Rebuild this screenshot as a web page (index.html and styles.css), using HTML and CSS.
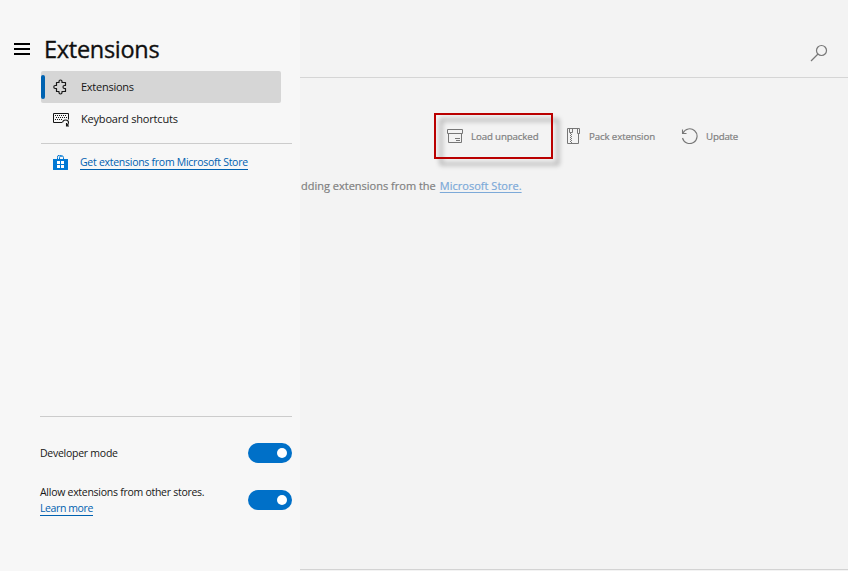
FILE: index.html
```html
<!DOCTYPE html>
<html lang="en">
<head>
<meta charset="utf-8">
<title>Extensions</title>
<link rel="stylesheet" href="styles.css">
</head>
<body>
<div class="app">
  <aside class="sidebar">
    <header class="brand">
      <svg class="menu" width="16" height="12" viewBox="0 0 16 12"><path d="M0 0h16v2H0zM0 5h16v2H0zM0 10h16v2H0z"/></svg>
      <h1>Extensions</h1>
    </header>
    <nav class="nav">
      <a class="nav-item active">
        <svg width="16" height="16" viewBox="0 0 16 16" fill="none" stroke="#161616" stroke-width="1.2" stroke-linejoin="round"><path d="M3.500 3.500H6V2.500Q6 1 7.500 1T9 2.500v1h3.500v3h-1Q10 6.500 10 8t1.500 1.500h1v3H9v1q0 1.500-1.500 1.500T6 13.500v-1H3.500v-3H2.200Q.800 9.500.800 8t1.400-1.500h1.300z"/></svg>
        <span class="t-ext">Extensions</span>
      </a>
      <a class="nav-item">
        <svg width="18" height="14" viewBox="0 0 18 14" fill="none" stroke="#161616"><path d="M9 9.500H.5v-9h15v6"/><path d="M2 2.500h12M3 4.500h11M2 6.500h8" stroke-dasharray="1 1"/><path d="M9.500 9.500q.5-2.500 3-2.500 3 0 3 2.500 0 2-2 3M13.500 10v3H16" stroke-width="1.100"/></svg>
        <span class="t-key">Keyboard shortcuts</span>
      </a>
    </nav>
    <div class="store">
      <svg width="15" height="16" viewBox="0 0 15 16"><path d="M4.500 4V2.500a2 2 0 0 1 4-.7M6.500 4V2.700a2 2 0 0 1 4 0V4" fill="none" stroke="#0078d4"/><path fill="#0078d4" d="M0 4h15v10.500q0 .5-.5.500H.5q-.5 0-.5-.5z"/><path fill="#fff" d="M4 6h3v3H4zM8 6h3v3H8zM4 10h3v3H4zM8 10h3v3H8z"/></svg>
      <a class="link t-get">Get extensions from Microsoft Store</a>
    </div>
    <section class="settings">
      <div class="setting dev">
        <span class="t-dev">Developer mode</span>
        <span class="toggle"></span>
      </div>
      <div class="setting allow">
        <div class="copy"><span class="t-allow">Allow extensions from other stores.</span><a class="link t-learn">Learn more</a></div>
        <span class="toggle"></span>
      </div>
    </section>
  </aside>
  <main class="content">
    <div class="topbar">
      <svg width="18" height="18" viewBox="0 0 18 18" fill="none" stroke="#777" stroke-width="1.2"><circle cx="11.500" cy="6.500" r="5"/><path d="M8 10L1 17"/></svg>
    </div>
    <div class="actions">
      <button class="load">
        <svg width="16" height="16" viewBox="0 0 16 16" fill="none" stroke="#777"><path d="M.5 1.500h15v4H.5zM1.500 5.500v9h13v-9M8 10.500h5M9 12.500h4"/></svg>
        <span class="t-load">Load unpacked</span>
        <i class="highlight"></i>
      </button>
      <button class="pack">
        <svg width="13" height="16" viewBox="0 0 13 16" fill="none" stroke="#777"><path d="M.5.5h12v5h-1v10H.5zM2.500.5v4h3v-4M10.500.5v5h2"/><path d="M3.500 5v10" stroke-dasharray="1 1"/><path d="M4.500 6v9" stroke-dasharray="1 1"/></svg>
        <span class="t-pack">Pack extension</span>
      </button>
      <button class="update">
        <svg width="18" height="16" viewBox="0 0 18 16" fill="none" stroke="#777" stroke-width="1.1"><path d="M2 5a7.400 7.400 0 1 1-.5 5M1.500 1.500v4h4"/></svg>
        <span class="t-update">Update</span>
      </button>
    </div>
    <p class="hint"><span class="t-hint">dding extensions from the</span> <a class="t-ms">Microsoft Store.</a></p>
  </main>
</div>
</body>
</html>
```
FILE: styles.css
```css
* { box-sizing: border-box; }
body { margin: 0; font: 11px/16px "Open Sans", "Noto Sans", sans-serif; color: #161616; }
svg { display: block; flex: none; }
span, a { white-space: nowrap; }
.app { display: flex; width: 848px; height: 571px; overflow: hidden; background: #f3f3f3; }
.sidebar { display: flex; flex-direction: column; width: 300px; flex: none; background: #f7f7f7; }
.brand { display: flex; align-items: center; gap: 14px; height: 71px; padding: 27px 0 0 14px; }
.menu { fill: #000; }
h1 { margin: 0; font-size: 23.5px; line-height: 32px; font-weight: 500; color: #101010; letter-spacing: -.28px; -webkit-text-stroke: .35px #101010; }
.nav { margin-left: 41px; width: 251px; height: 73px; border-bottom: 1px solid #ccc; }
.nav-item { display: flex; align-items: center; position: relative; width: 240px; height: 32px; padding-left: 12px; }
.nav-item svg { margin-right: 12px; }
.nav-item:nth-child(2) svg { margin: 2px 10px 0 0; }
.active { background: #d6d6d6; border-radius: 2px; }
.active::before { content: ""; position: absolute; left: 0; top: 4px; width: 4px; height: 24px; border-radius: 2px; background: #0063b1; }
.store { display: flex; align-items: center; gap: 12px; height: 37px; padding-left: 53px; }
.link { color: #0061b0; border-bottom: 1px solid #0061b0; line-height: 13px; padding-top: 2px; }
.t-ext { letter-spacing: -.25px; }
.t-key { letter-spacing: -.19px; }
.t-get, .t-dev, .t-allow, .t-learn { font-size: 10.5px; }
.t-get { letter-spacing: -.27px; margin-bottom: 2px; }
.t-dev { letter-spacing: -.26px; }
.t-allow { letter-spacing: -.27px; }
.t-learn { letter-spacing: -.4px; }
.settings { margin: auto 8px 0 40px; height: 155px; border-top: 1px solid #ccc; }
.setting { display: flex; justify-content: space-between; align-items: center; }
.dev { height: 20px; margin-top: 26px; }
.allow { height: 32px; margin-top: 21px; }
.copy { display: flex; flex-direction: column; align-items: flex-start; }
.toggle { display: flex; align-items: center; justify-content: flex-end; width: 44px; height: 20px; padding-right: 5px; border-radius: 10px; background: #0070c8; }
.toggle::after { content: ""; width: 10px; height: 10px; border-radius: 50%; background: #fff; }
.content { flex: 1; border-bottom: 1px solid #d3d3d3; height: 570px; color: #777; }
.topbar { height: 78px; border-bottom: 1px solid #d5d5d5; padding: 44px 20px 0 0; display: flex; justify-content: flex-end; }
.actions { display: flex; height: 46px; margin: 35px 0 0 134px; }
button { display: flex; align-items: center; border: 0; padding: 0; background: none; font: 500 9.7px/16px "Open Sans", sans-serif; color: #808080; -webkit-text-stroke: .2px #808080; }
button span { margin-bottom: -1px; }
.t-load, .t-pack { letter-spacing: -.12px; }
.t-update { letter-spacing: -.18px; }
.load { position: relative; width: 119px; padding-left: 13px; }
.load svg { margin-right: 8px; }
.highlight { position: absolute; inset: 0; border: 2px solid #ba0000; filter: drop-shadow(6px 6px 2.5px rgba(0,0,0,.4)); }
.pack { padding-left: 14px; width: 128px; }
.pack svg { margin-right: 9px; }
.update svg { margin-right: 7px; }
.hint { display: flex; gap: 4px; margin: 19px 0 0 1px; font-size: 11px; font-weight: 500; color: #808080; -webkit-text-stroke: .2px; }
.hint a { color: #7ca9d8; text-decoration: underline; text-underline-offset: 2px; letter-spacing: .02px; }
```
